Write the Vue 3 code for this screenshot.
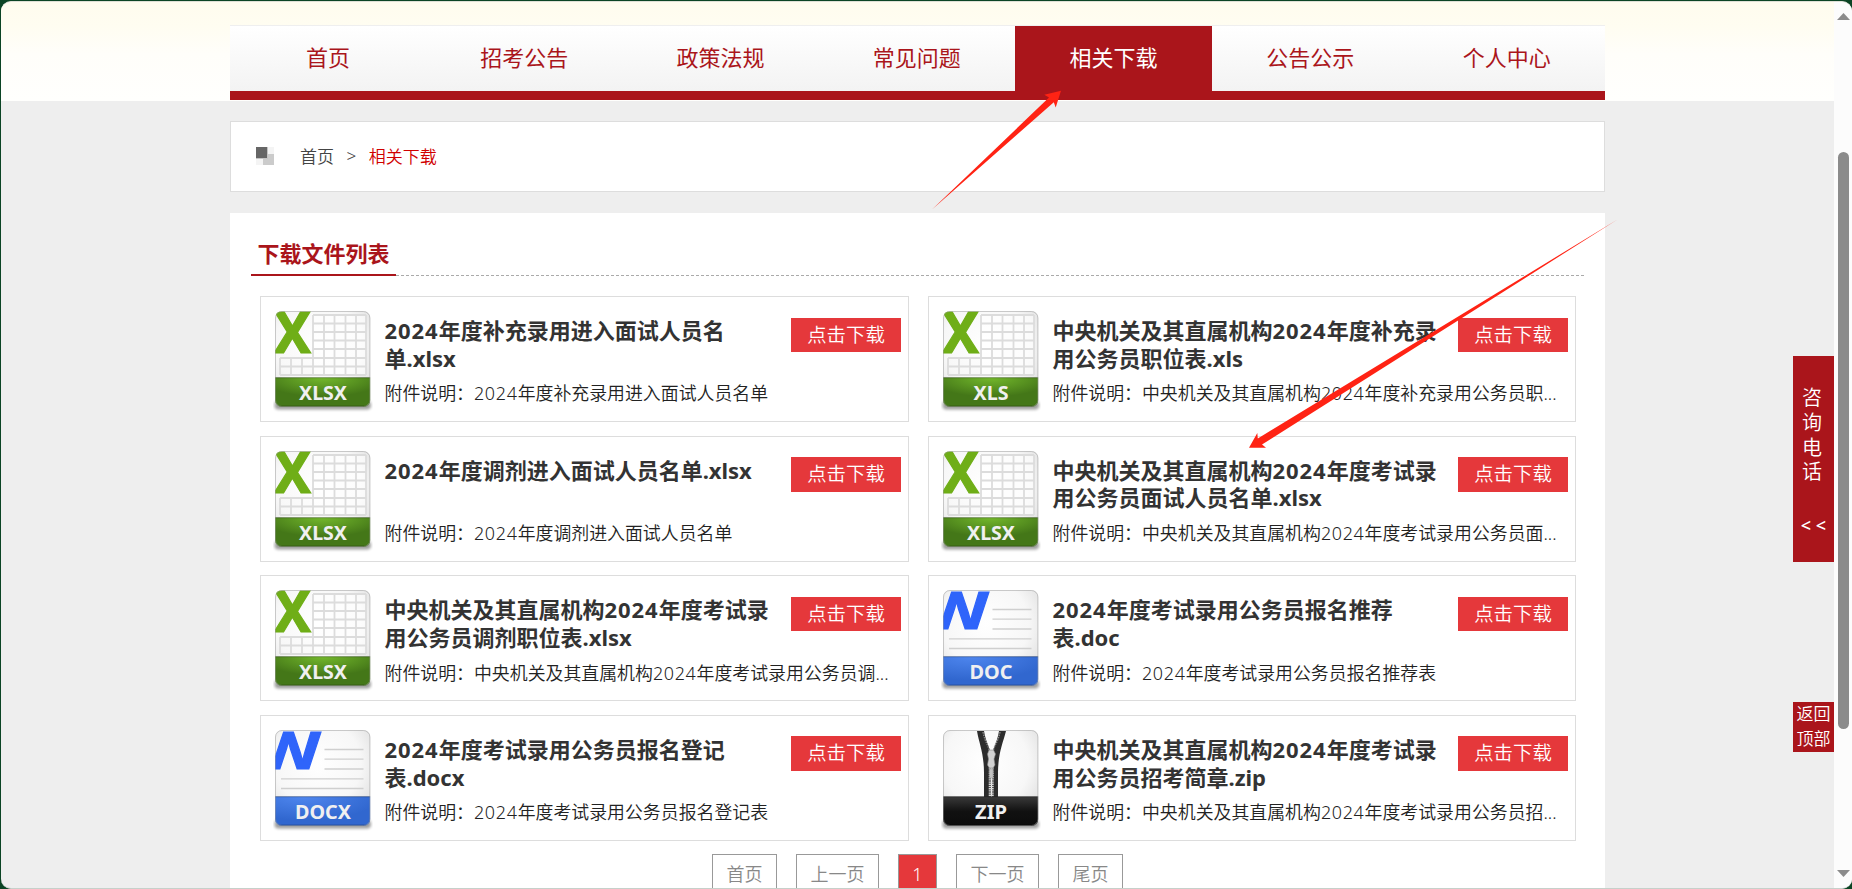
<script setup>
const nav = ['首页', '招考公告', '政策法规', '常见问题', '相关下载', '公告公示', '个人中心']
const activeNav = '相关下载'

const files = [
  { ext: 'XLSX', title: '2024年度补充录用进入面试人员名单.xlsx', desc: '2024年度补充录用进入面试人员名单' },
  { ext: 'XLS', title: '中央机关及其直属机构2024年度补充录用公务员职位表.xls', desc: '中央机关及其直属机构2024年度补充录用公务员职...' },
  { ext: 'XLSX', title: '2024年度调剂进入面试人员名单.xlsx', desc: '2024年度调剂进入面试人员名单' },
  { ext: 'XLSX', title: '中央机关及其直属机构2024年度考试录用公务员面试人员名单.xlsx', desc: '中央机关及其直属机构2024年度考试录用公务员面...' },
  { ext: 'XLSX', title: '中央机关及其直属机构2024年度考试录用公务员调剂职位表.xlsx', desc: '中央机关及其直属机构2024年度考试录用公务员调...' },
  { ext: 'DOC', title: '2024年度考试录用公务员报名推荐表.doc', desc: '2024年度考试录用公务员报名推荐表' },
  { ext: 'DOCX', title: '2024年度考试录用公务员报名登记表.docx', desc: '2024年度考试录用公务员报名登记表' },
  { ext: 'ZIP', title: '中央机关及其直属机构2024年度考试录用公务员招考简章.zip', desc: '中央机关及其直属机构2024年度考试录用公务员招...' },
]

const pages = [
  { label: '首页', width: 65 },
  { label: '上一页', width: 83 },
  { label: '1', width: 39, current: true },
  { label: '下一页', width: 83 },
  { label: '尾页', width: 65 },
]

const kind = (ext) => (ext.startsWith('XLS') ? 'sheet' : ext.startsWith('DOC') ? 'word' : 'zip')
const bandFill = { sheet: 'url(#band-green)', word: 'url(#band-blue)', zip: 'url(#band-black)' }
const labelWidth = { XLSX: 48, XLS: 35, DOC: 43, DOCX: 56, ZIP: 32 }
const split = (text) => text.split(/(\d+)/).filter(Boolean)
const isNumber = (part) => /^\d+$/.test(part)
</script>

<template>
  <div class="screen">
    <div class="window">
      <div class="page">
        <header class="header">
          <nav class="nav">
            <a v-for="item in nav" :key="item" class="nav-item" :class="{ active: item === activeNav }">{{ item }}</a>
          </nav>
        </header>

        <div class="crumbs">
          <svg class="crumb-icon" width="18" height="18" viewBox="0 0 18 18">
            <rect width="18" height="18" fill="#f4f4f4" />
            <rect x="7" y="7" width="11" height="11" fill="#cbcbcb" />
            <rect width="12" height="12" fill="#c4c4c4" />
            <rect width="11" height="11" fill="#666" />
          </svg>
          <span>首页</span>
          <span class="sep">&gt;</span>
          <span class="here">相关下载</span>
        </div>

        <main class="panel">
          <div class="heading"><h2>下载文件列表</h2></div>

          <div class="grid">
            <article v-for="file in files" :key="file.title" class="card">
              <svg class="file-icon" width="100" height="104" viewBox="-2 0 100 104">
                <rect x="-0.5" y="90" width="96.5" height="8.500" rx="4" fill="#000" opacity=".38" filter="url(#soft)" />
                <g clip-path="url(#tile)">
                  <rect width="95.4" height="96" fill="url(#paper)" />
                  <template v-if="kind(file.ext) === 'sheet'">
                    <rect x="37" y="3.500" width="54" height="61" fill="#fff" opacity=".6" />
                    <path d="M38 4V64M49 4V64M59.500 4V64M70.500 4V64M81 4V64M91 4V64M38 4H91M38 12.500H91M38 21H91M38 29.500H91M38 38H91M5 47H91M5 55.500H91M5 64H91M5 47V64M16 47V64M27 47V64" fill="none" stroke="#dcdcdc" stroke-width="1.800" />
                    <text x="-1" y="41.700" font-size="56.500" textLength="37" lengthAdjust="spacingAndGlyphs" class="glyph" fill="#6fae17" stroke="#6fae17" stroke-width="1.200">X</text>
                  </template>
                  <template v-else-if="kind(file.ext) === 'word'">
                    <path d="M49.500 19.500H88.500M49.500 29.200H88.500M49.500 39H88.500M6 48.800H88.500M6 58.500H88.500" stroke="#cfcfcf" stroke-width="1.300" />
                    <text x="-19" y="38.500" font-size="52.500" textLength="65" lengthAdjust="spacingAndGlyphs" class="glyph" fill="#2f64fa" stroke="#2f64fa" stroke-width="1">W</text>
                  </template>
                  <template v-else>
                    <path d="M34 1H41C43 14 48 17 48 30V67H41V43C41 23 36 13 34 1Z" fill="#2c2c2c" />
                    <path d="M63 1H56C54 14 49 17 49 30V67H55V43C55 23 60 13 63 1Z" fill="#2c2c2c" />
                    <path d="M40 2C42 13 46.500 16 46.500 24M57 2C55 13 50 16 50 24" fill="none" stroke="#8d8d8d" stroke-width="1.300" stroke-dasharray="1.500 1" />
                    <path d="M48.200 36V67" stroke="#d9d9d9" stroke-width="5" stroke-dasharray="1.400 .8" />
                    <path d="M46 20L50.500 20L52.500 24L51 29L52 35L50 38H46.500L44.500 35L45.500 29L44.500 24Z" fill="#d2d2d2" stroke="#888" stroke-width=".6" />
                    <path d="M46.500 39H50V48H46.500Z" fill="#c4c4c4" stroke="#999" stroke-width=".5" />
                  </template>
                  <rect y="66.500" width="95.400" height="29.500" :fill="bandFill[kind(file.ext)]" />
                  <rect y="66.200" width="95.400" height="1" fill="#000" opacity=".3" />
                  <rect y="94.500" width="95.400" height="1.500" fill="#000" opacity=".2" />
                </g>
                <rect x=".5" y=".5" width="94.400" height="95" rx="6.500" fill="none" stroke="#999" stroke-opacity=".5" />
                <text x="48" y="88.500" text-anchor="middle" font-size="20" :textLength="labelWidth[file.ext]" lengthAdjust="spacingAndGlyphs" class="glyph" fill="#f0f0f0">{{ file.ext }}</text>
              </svg>
              <div class="body">
                <h3><span v-for="(part, i) in split(file.title)" :key="i" :class="{ num: isNumber(part) }">{{ part }}</span></h3>
                <p>附件说明：<span v-for="(part, i) in split(file.desc)" :key="i" :class="{ num: isNumber(part) }">{{ part }}</span></p>
              </div>
              <a class="download">点击下载</a>
            </article>
          </div>

          <div class="pager">
            <a v-for="page in pages" :key="page.label" :class="{ current: page.current }" :style="{ width: page.width + 'px' }">{{ page.label }}</a>
          </div>
        </main>
      </div>

      <div class="scrollbar">
        <svg width="13" height="7" viewBox="0 0 13 7"><path d="M6.500 0L13 7H0Z" fill="#8b8b8b" /></svg>
        <div class="thumb"></div>
        <svg class="down" width="13" height="7" viewBox="0 0 13 7"><path d="M0 0H13L6.500 7Z" fill="#8b8b8b" /></svg>
      </div>
    </div>

    <aside class="contact">
      <span v-for="c in '咨询电话'" :key="c">{{ c }}</span>
      <span class="chevrons">&lt;&nbsp;&lt;</span>
    </aside>
    <aside class="top-link">返回<br />顶部</aside>

    <svg class="arrows" width="1852" height="889" viewBox="0 0 1852 889">
      <defs>
        <clipPath id="tile"><rect width="95.400" height="96" rx="7" /></clipPath>
        <filter id="soft" x="-10%" y="-60%" width="120%" height="220%"><feGaussianBlur stdDeviation="1.600" /></filter>
        <radialGradient id="paper" cx=".45" cy=".35" r=".75">
          <stop offset="0" stop-color="#fff" /><stop offset=".6" stop-color="#f7f7f7" /><stop offset="1" stop-color="#d9d9d9" />
        </radialGradient>
        <radialGradient id="band-green" cx=".5" cy="0" r=".65">
          <stop offset="0" stop-color="#74b92c" /><stop offset="1" stop-color="#447718" />
        </radialGradient>
        <radialGradient id="band-blue" cx=".3" cy="0" r=".8">
          <stop offset="0" stop-color="#4e86ee" /><stop offset="1" stop-color="#3167cf" />
        </radialGradient>
        <linearGradient id="band-black" x2="0" y2="1">
          <stop offset="0" stop-color="#3a3a3a" /><stop offset=".5" stop-color="#111" /><stop offset="1" stop-color="#0c0c0c" />
        </linearGradient>
      </defs>
      <g fill="#ff2314">
        <path d="M932 209.500L1049 97.500L1044.300 94.700L1061 90.700L1055.700 107.500L1053.800 102.300Z" />
        <path d="M1617.500 219.500L1257.800 438.500L1257.300 433L1249 447.800L1266 447.800L1262 444.500Z" />
      </g>
    </svg>
  </div>
</template>

<style>
body {
  overflow: hidden;
}
</style>

<style scoped>
.screen {
  position: relative;
  box-sizing: border-box;
  width: 1852px;
  height: 889px;
  padding: 1px 0 0 1px;
  background: #0b4424;
  overflow: hidden;
  font-family: "Noto Sans", "Noto Sans CJK SC", sans-serif;
  color: #333;
}
.window {
  display: flex;
  box-sizing: border-box;
  height: 888px;
  border-top: 1px solid #dfe0d6;
  border-bottom: 1px solid #c6d0ca;
  border-radius: 10px;
  background: #eee;
  overflow: hidden;
}
.page {
  width: 1833px;
  height: 886px;
  overflow: hidden;
}
.header {
  box-sizing: border-box;
  height: 99px;
  padding: 23px 0 0 229px;
  background: linear-gradient(#fffcee 0, #fffdf1 24px, #fffefa 52px, #fffffd 99px);
}
.nav {
  display: grid;
  grid-template-columns: repeat(4, 196.250px) 197px 1fr 1fr;
  box-sizing: border-box;
  width: 1375px;
  height: 75px;
  border-top: 1px solid #efefef;
  border-bottom: 9px solid #aa151b;
  background: linear-gradient(#fff, #f3f3f3);
}
.nav-item {
  color: #aa151b;
  font-size: 22px;
  font-weight: 400;
  line-height: 63px;
  text-align: center;
}
.nav-item.active {
  background: #aa151b;
  color: #fff;
}
.crumbs {
  display: flex;
  align-items: center;
  box-sizing: border-box;
  width: 1375px;
  height: 71px;
  margin: 20px 0 0 229px;
  padding: 0 0 2px 25px;
  border: 1px solid #ddd;
  background: #fff;
  font-size: 17px;
  font-weight: 350;
  color: #444;
}
.crumb-icon {
  margin-right: 26px;
}
.sep {
  margin: 0 12.500px;
}
.here {
  color: #d00000;
}
.panel {
  box-sizing: border-box;
  width: 1375px;
  height: 700px;
  margin: 21px 0 0 229px;
  padding: 20px 21px 0;
  background: #fff;
}
.heading {
  height: 43px;
  background: repeating-linear-gradient(90deg, #aaa 0 3px, #fff 3px 5px) 0 100% / 100% 1px no-repeat;
}
h2 {
  box-sizing: border-box;
  width: 145px;
  height: 43px;
  margin: 0;
  padding-left: 6.500px;
  border-bottom: 2px solid #aa151b;
  color: #aa151b;
  font-size: 22px;
  font-weight: 700;
  line-height: 41px;
}
.grid {
  display: grid;
  grid-template-columns: 649px 648px;
  grid-auto-rows: 126px;
  gap: 13.6px 19px;
  margin: 20px 0 0 9px;
}
.card {
  display: flex;
  box-sizing: border-box;
  padding: 14px 7px 0 12.3px;
  border: 1px solid #ddd;
}
.file-icon {
  flex: none;
}
.glyph {
  font-family: "Noto Sans", sans-serif;
  font-weight: 700;
}
.body {
  width: 510px;
  margin-left: 11.200px;
  margin-right: -105px;
  flex: none;
}
h3 {
  width: 396px;
  height: 55px;
  margin: 6.200px 0 0;
  font-size: 22px;
  font-weight: 700;
  line-height: 27.600px;
}
h3 .num {
  letter-spacing: 0.95px;
}
p {
  margin: 8.200px 0 0;
  color: #222;
  font-size: 17.900px;
  font-weight: 350;
  line-height: 26px;
  white-space: nowrap;
}
p .num {
  letter-spacing: 0.700px;
}
.download {
  flex: none;
  width: 110px;
  height: 34.400px;
  margin: 6.600px 0 0 auto;
  background: #e5383b;
  color: #fff;
  font-size: 19.400px;
  font-weight: 350;
  line-height: 34.400px;
  text-align: center;
}
.pager {
  display: flex;
  justify-content: center;
  gap: 19px;
  margin-top: 13px;
}
.pager a {
  box-sizing: border-box;
  height: 42px;
  border: 1px solid #999;
  color: #888;
  font-size: 18px;
  font-weight: 350;
  line-height: 39px;
  text-align: center;
}
.pager .current {
  background: #e5383b;
  color: #fff;
}
.scrollbar {
  display: flex;
  flex-direction: column;
  align-items: center;
  box-sizing: border-box;
  width: 18px;
  height: 886px;
  padding: 11px 0 11px 1px;
  background: #fcfcfc;
}
.thumb {
  width: 11px;
  height: 577px;
  margin-top: 132px;
  border-radius: 6px;
  background: #8b8b8b;
}
.down {
  margin-top: auto;
}
.contact {
  position: absolute;
  left: 1793px;
  top: 356px;
  display: flex;
  flex-direction: column;
  align-items: center;
  box-sizing: border-box;
  width: 41px;
  height: 206px;
  padding: 30px 3px 0 0;
  background: #aa151b;
  color: #fff;
  font-size: 20px;
  font-weight: 350;
  line-height: 24.800px;
}
.chevrons {
  margin: 28px -3px 0 0;
  font-size: 18px;
  font-weight: 500;
}
.top-link {
  position: absolute;
  left: 1793px;
  top: 702px;
  box-sizing: border-box;
  width: 41px;
  height: 50px;
  padding-left: 3.500px;
  background: #aa151b;
  color: #fff;
  font-size: 17px;
  font-weight: 350;
  line-height: 24.500px;
}
.arrows {
  position: absolute;
  left: 0;
  top: 0;
}
</style>
